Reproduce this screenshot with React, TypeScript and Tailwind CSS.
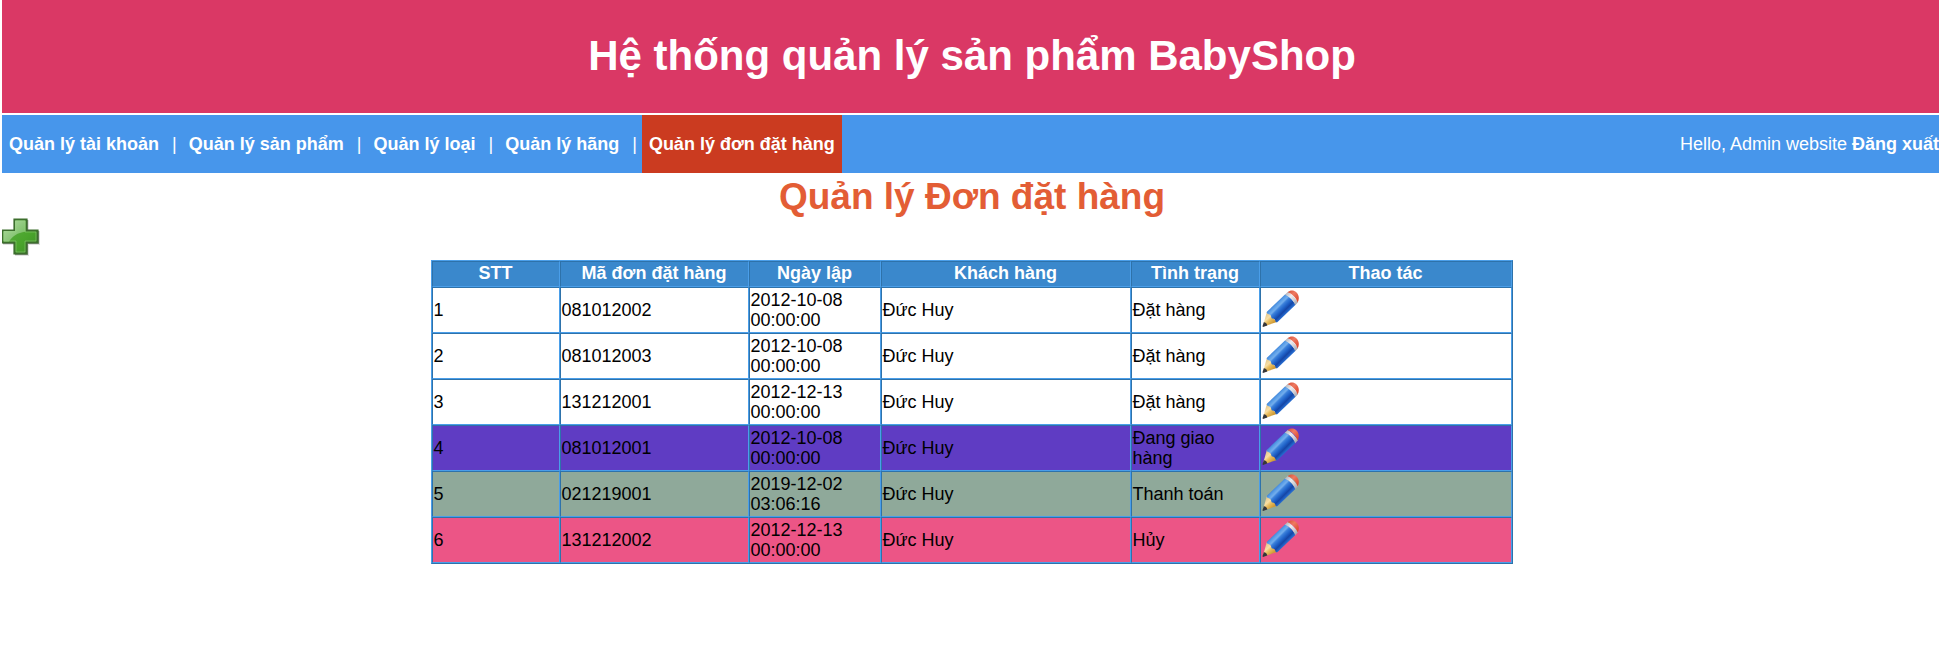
const menu = [
  'Quản lý tài khoản',
  'Quản lý sản phẩm',
  'Quản lý loại',
  'Quản lý hãng',
  'Quản lý đơn đặt hàng',
];
const activeItem = 'Quản lý đơn đặt hàng';

const columns = [
  { label: 'STT', width: 'w-[128px]' },
  { label: 'Mã đơn đặt hàng', width: 'w-[189px]' },
  { label: 'Ngày lập', width: 'w-[132px]' },
  { label: 'Khách hàng', width: 'w-[250px]' },
  { label: 'Tình trạng', width: 'w-[129px]' },
  { label: 'Thao tác', width: 'w-[252px]' },
];

const orders = [
  { id: '081012002', date: '2012-10-08 00:00:00', status: 'Đặt hàng', row: 'bg-white' },
  { id: '081012003', date: '2012-10-08 00:00:00', status: 'Đặt hàng', row: 'bg-white' },
  { id: '131212001', date: '2012-12-13 00:00:00', status: 'Đặt hàng', row: 'bg-white' },
  { id: '081012001', date: '2012-10-08 00:00:00', status: 'Đang giao hàng', row: 'bg-[#5f3cc3]' },
  { id: '021219001', date: '2019-12-02 03:06:16', status: 'Thanh toán', row: 'bg-[#8fa99a]' },
  { id: '131212002', date: '2012-12-13 00:00:00', status: 'Hủy', row: 'bg-[#ec5586]' },
];

const cell =
  'border border-t-[#2e72aa] border-l-[#2e72aa] border-r-[#4a9ee9] border-b-[#4a9ee9]';
const bodyCell = `${cell} pt-0 pr-px pb-px pl-px`;

function PlusIcon() {
  return (
    <svg className="block size-[38px]" viewBox="0 0 38 38" aria-hidden="true">
      <defs>
        <linearGradient id="plusBase" x1="0" y1="0" x2="1" y2="1">
          <stop offset="0" stopColor="#5fb045" />
          <stop offset="0.6" stopColor="#4aa52c" />
          <stop offset="1" stopColor="#3f8f27" />
        </linearGradient>
        <linearGradient id="plusShine" x1="0" y1="0" x2="1" y2="1">
          <stop offset="0" stopColor="#b4dca6" />
          <stop offset="1" stopColor="#6db757" />
        </linearGradient>
        <clipPath id="plusClip">
          <path d="M13 2h11v11h11v11H24v11H13V24H1V13h12z" />
        </clipPath>
      </defs>
      <path d="M13 2h14v11h11v14H27v11H13V27H1V13h12z" fill="#000" opacity="0.12" />
      <path d="M13 2h13v11h11v13H26v11H13V26H1V13h12z" fill="#000" opacity="0.35" />
      <path d="M12 1h13v11h11v13H25v11H12V25H0V12h12z" fill="#3c6e2d" />
      <path d="M13.500 2.500h10v11h11v10h-11v11h-10v-11h-12v-10h12z" fill="url(#plusBase)" />
      <path d="M1.500 2.500h22v11C15 15 11 18 7 23.500H1.500z" fill="url(#plusShine)" clipPath="url(#plusClip)" />
      <path d="M12 1v11H0v13h12v11h13V25h11V12H25V1z" fill="none" stroke="#3c6e2d" strokeWidth="1.200" />
      <path
        d="M14 3h9v11h11v9H23v11h-9V23H2v-9h12z"
        fill="none"
        stroke="#9bd486"
        strokeWidth="1"
        opacity="0.45"
      />
    </svg>
  );
}

function PencilIcon() {
  return (
    <svg className="block size-[37px]" viewBox="0 0 37 37" aria-hidden="true">
      <defs>
        <linearGradient id="pencilBody" gradientUnits="userSpaceOnUse" x1="13" y1="13" x2="23.500" y2="23.500">
          <stop offset="0" stopColor="#3a80d6" />
          <stop offset="0.18" stopColor="#5b9fe8" />
          <stop offset="0.32" stopColor="#74aeec" />
          <stop offset="0.44" stopColor="#3b80da" />
          <stop offset="0.64" stopColor="#1f62c8" />
          <stop offset="0.82" stopColor="#1546a6" />
          <stop offset="1" stopColor="#2468cc" />
        </linearGradient>
        <linearGradient id="pencilWood" gradientUnits="userSpaceOnUse" x1="4" y1="25" x2="11" y2="33">
          <stop offset="0" stopColor="#e6cb92" />
          <stop offset="0.35" stopColor="#f8dfa4" />
          <stop offset="0.6" stopColor="#e9be5f" />
          <stop offset="1" stopColor="#cf9a36" />
        </linearGradient>
        <linearGradient id="pencilBand" gradientUnits="userSpaceOnUse" x1="24" y1="4" x2="34" y2="14">
          <stop offset="0" stopColor="#b9bbc2" />
          <stop offset="0.35" stopColor="#ececef" />
          <stop offset="0.7" stopColor="#cfcfd4" />
          <stop offset="1" stopColor="#a9aab2" />
        </linearGradient>
        <linearGradient id="pencilRubber" gradientUnits="userSpaceOnUse" x1="27" y1="1" x2="36" y2="10">
          <stop offset="0" stopColor="#d9563d" />
          <stop offset="0.4" stopColor="#ee7a62" />
          <stop offset="1" stopColor="#dc4a30" />
        </linearGradient>
      </defs>
      <path d="M5 21.500L1 35.500l1 .8 13-4.300z" fill="url(#pencilWood)" />
      <path d="M1.800 32.200c2 .2 3.200 1.300 3.500 3.200L1 36.900 .5 36.300z" fill="#35363a" />
      <path
        d="M23.500 4L5.200 21.500c-.9 1-.4 2.200.9 2.400 1.900.3 3 1.500 3.200 3.300.1.800.6 1.200 1.400 1.300 1.600.2 2.500 1.100 2.700 2.600.2 1.300 1.500 1.600 2.400.7L33.800 14.600C31 11 28 7 23.500 4z"
        fill="url(#pencilBody)"
      />
      <path d="M26 1.800L22.800 4.700c4.800 1.600 8.600 5.300 10.400 10.500l3-3.200L31 6z" fill="url(#pencilBand)" />
      <path d="M25.600 2.200C28 0 31.800-.2 34.300 2.200c2.900 2.700 3.200 7 1.400 10.200C34 7.600 30.400 3.800 25.600 2.200z" fill="url(#pencilRubber)" />
    </svg>
  );
}

export default function App() {
  return (
    <div className="overflow-hidden bg-white pr-[5px] pl-[2px] font-['Liberation_Sans',Arial,sans-serif] text-[18px] leading-[20px] text-black">
      <header className="flex h-[113px] items-center justify-center bg-[#da3865] pb-[2px] pl-[3px] text-white">
        <h1 className="text-[42px] leading-[48px] font-bold">Hệ thống quản lý sản phẩm BabyShop</h1>
      </header>

      <nav className="mt-[2px] flex h-[58px] items-stretch justify-between bg-[#4796eb] whitespace-nowrap text-white">
        <ul className="flex items-stretch">
          {menu.map((item, i) => (
            <li key={item} className="flex items-stretch">
              {i > 0 && (
                <span className="flex items-center pr-[5px] pl-[6px]" aria-hidden="true">
                  |
                </span>
              )}
              <a
                href="#"
                aria-current={item === activeItem ? 'page' : undefined}
                className={`flex items-center px-[7px] font-bold ${item === activeItem ? 'bg-[#cb3b20]' : ''}`}
              >
                {item}
              </a>
            </li>
          ))}
        </ul>
        <p className="flex items-center gap-[5px]">
          Hello, Admin website
          <a href="#" className="font-bold">
            Đăng xuất
          </a>
        </p>
      </nav>

      <main>
        <h2 className="pt-[2px] pl-[3px] text-center text-[37px] leading-[43px] font-bold text-[#e35d35]">
          Quản lý Đơn đặt hàng
        </h2>
        <a href="#" aria-label="Thêm đơn đặt hàng" className="block w-fit">
          <PlusIcon />
        </a>

        <div className="pt-[4px] pl-[2px]">
          <table className="mx-auto w-[1082px] max-w-full table-fixed border-separate border-spacing-0 border border-t-[#4a9ee9] border-r-[#2e72aa] border-b-[#2e72aa] border-l-[#4a9ee9]">
            <thead>
              <tr className="bg-[#3a88cc] text-white">
                {columns.map((c) => (
                  <th key={c.label} scope="col" className={`${cell} ${c.width} h-[26px] px-0 pt-0 pb-[2px] font-bold`}>
                    {c.label}
                  </th>
                ))}
              </tr>
            </thead>
            <tbody>
              {orders.map((o, i) => (
                <tr key={o.id} className={`${o.row} h-[46px]`}>
                  <td className={bodyCell}>{i + 1}</td>
                  <td className={bodyCell}>{o.id}</td>
                  <td className={bodyCell}>{o.date}</td>
                  <td className={bodyCell}>Đức Huy</td>
                  <td className={bodyCell}>{o.status}</td>
                  <td className={`${cell} px-px pt-0 pb-[4px]`}>
                    <a href="#" aria-label={`Sửa đơn ${o.id}`} className="block w-fit">
                      <PencilIcon />
                    </a>
                  </td>
                </tr>
              ))}
            </tbody>
          </table>
        </div>
      </main>
    </div>
  );
}
